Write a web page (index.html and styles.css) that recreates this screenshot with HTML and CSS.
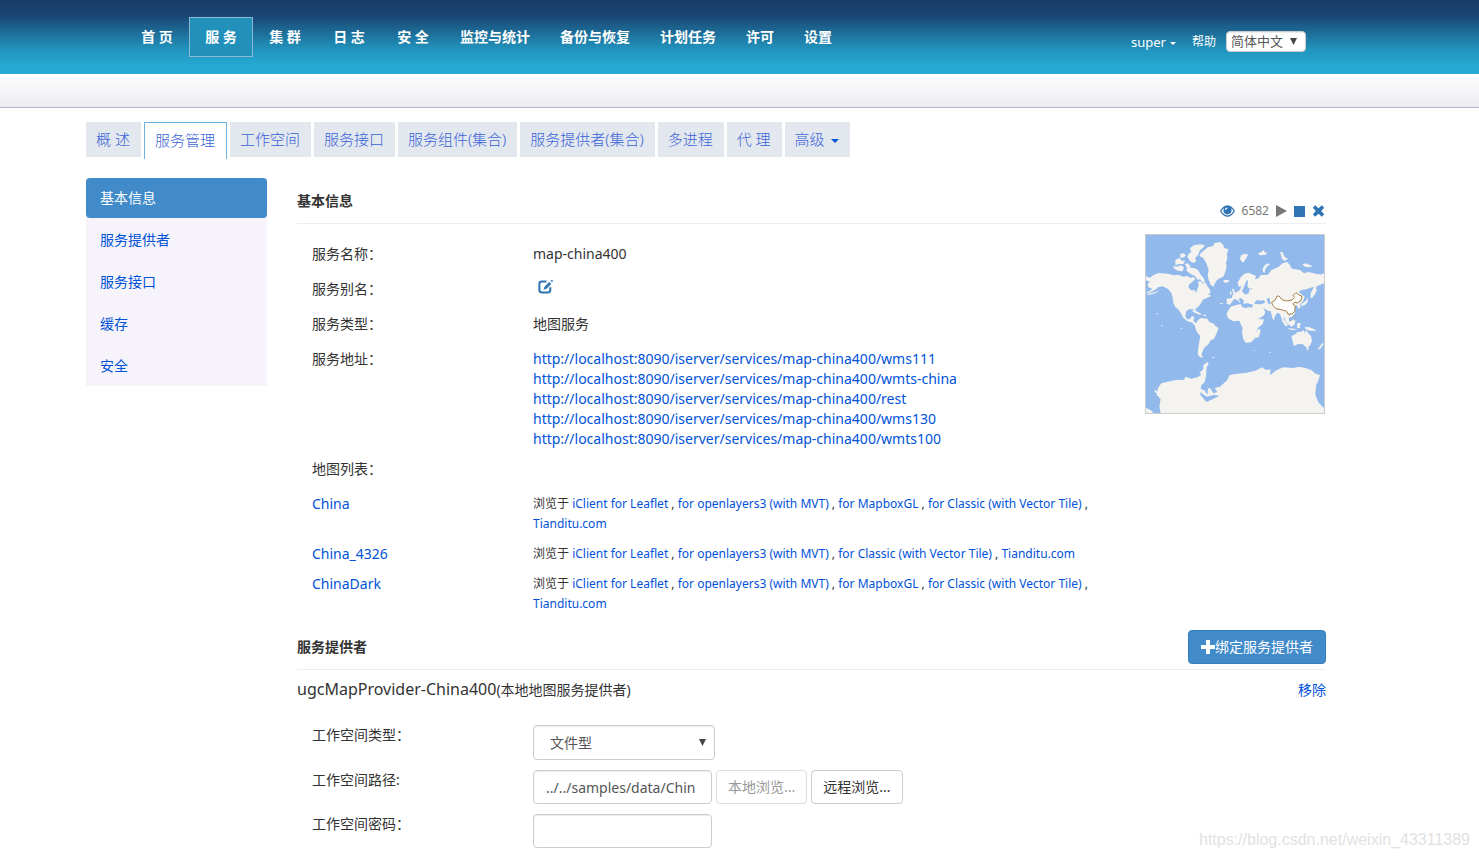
FILE: index.html
```html
<!DOCTYPE html>
<html lang="zh-CN">
<head>
<meta charset="utf-8">
<title>服务管理</title>
<link rel="stylesheet" href="styles.css">
</head>
<body>
<header class="topbar">
  <nav class="nav">
    <a href="#">首 页</a>
    <a href="#" class="current">服 务</a>
    <a href="#">集 群</a>
    <a href="#">日 志</a>
    <a href="#">安 全</a>
    <a href="#">监控与统计</a>
    <a href="#">备份与恢复</a>
    <a href="#">计划任务</a>
    <a href="#">许可</a>
    <a href="#">设置</a>
  </nav>
  <div class="account">
    <a href="#" class="user">super<span class="caret caret-small"></span></a>
    <a href="#">帮助</a>
    <span class="select-wrap lang">
      <select aria-label="语言"><option>简体中文</option></select>
      <svg class="arrow" viewBox="0 0 8 8" aria-hidden="true"><path d="M0 0h8L4 8z"/></svg>
    </span>
  </div>
</header>
<div class="subbar"></div>

<div class="page">
  <nav class="tabs">
    <a href="#">概 述</a>
    <a href="#" class="current">服务管理</a>
    <a href="#">工作空间</a>
    <a href="#">服务接口</a>
    <a href="#">服务组件(集合)</a>
    <a href="#">服务提供者(集合)</a>
    <a href="#">多进程</a>
    <a href="#">代 理</a>
    <a href="#">高级<span class="caret"></span></a>
  </nav>

  <div class="columns">
    <nav class="side">
      <a href="#" class="current">基本信息</a>
      <a href="#">服务提供者</a>
      <a href="#">服务接口</a>
      <a href="#">缓存</a>
      <a href="#">安全</a>
    </nav>

    <main class="main">
      <div class="section-head">
        <h2>基本信息</h2>
        <div class="status">
          <svg class="eye" viewBox="0 0 44 34" aria-hidden="true"><path fill="#2f75b5" fill-rule="evenodd" d="M0 17C6 6 14 0 22 0s16 6 22 17C38 28 30 34 22 34S6 28 0 17zm4 0c5 8 11 13 18 13s13-5 18-13c-2-4-5-7-8-9 1 2 2 4 2 7 0 7-5 12-12 12s-12-5-12-12c0-3 1-5 2-7-3 2-6 5-8 9z"/><circle cx="22" cy="14" r="9" fill="#2f75b5"/><path d="M16 14c0-4 3-6 6-6" fill="none" stroke="#fff" stroke-width="3"/></svg>
          <span>6582</span>
          <button type="button" aria-label="启动"><svg class="play" viewBox="0 0 11 12"><path fill="#777" d="M0 0l11 6-11 6z"/></svg></button>
          <button type="button" aria-label="停止"><svg class="stop" viewBox="0 0 11 11"><path fill="#2f75b5" d="M0 0h11v11H0z"/></svg></button>
          <button type="button" aria-label="删除"><svg class="cross" viewBox="0 0 36 36"><path fill="#2f75b5" d="M8 1l10 9L28 1l7 7-9 10 9 10-7 7-10-9-10 9-7-7 9-10L1 8z"/></svg></button>
        </div>
      </div>

      <div class="info">
        <div class="rows">
          <div class="row"><div class="label">服务名称：</div><div>map-china400</div></div>
          <div class="row"><div class="label">服务别名：</div><div><button type="button" class="edit" aria-label="编辑"><svg viewBox="0 0 44 40"><path fill="none" stroke="#2f75b5" stroke-width="6" d="M25 4H11Q4 4 4 11v18q0 7 7 7h18q7 0 7-7v-8"/><path fill="#2f75b5" d="M16 28l3-9L33 5l6 6-14 14zM36 2l2-2h6l-2 6z"/></svg></button></div></div>
          <div class="row"><div class="label">服务类型：</div><div>地图服务</div></div>
          <div class="row"><div class="label">服务地址：</div><div class="urls">
            <a href="#">http://localhost:8090/iserver/services/map-china400/wms111</a>
            <a href="#">http://localhost:8090/iserver/services/map-china400/wmts-china</a>
            <a href="#">http://localhost:8090/iserver/services/map-china400/rest</a>
            <a href="#">http://localhost:8090/iserver/services/map-china400/wms130</a>
            <a href="#">http://localhost:8090/iserver/services/map-china400/wmts100</a>
          </div></div>
          <div class="row"><div class="label">地图列表：</div></div>
          <div class="row"><a href="#">China</a><div class="views">浏览于 <a href="#">iClient for Leaflet</a> , <a href="#">for openlayers3 (with MVT)</a> , <a href="#">for MapboxGL</a> , <a href="#">for Classic (with Vector Tile)</a> , <a href="#">Tianditu.com</a></div></div>
          <div class="row"><a href="#">China_4326</a><div class="views">浏览于 <a href="#">iClient for Leaflet</a> , <a href="#">for openlayers3 (with MVT)</a> , <a href="#">for Classic (with Vector Tile)</a> , <a href="#">Tianditu.com</a></div></div>
          <div class="row"><a href="#">ChinaDark</a><div class="views">浏览于 <a href="#">iClient for Leaflet</a> , <a href="#">for openlayers3 (with MVT)</a> , <a href="#">for MapboxGL</a> , <a href="#">for Classic (with Vector Tile)</a> , <a href="#">Tianditu.com</a></div></div>
        </div>
        <svg class="map" viewBox="18 121 534 534" role="img" aria-label="map-china400">
          <path fill="#91b9eb" d="M18 121h534v534H18z"/>
          <g fill="#f4f3f0">
            <path d="M42 240l14-5 26 2 20 5 14-2 12 6 14-2 10 6 8-4 6 8-10 8-8 10 4 10 12 3 4 10 4-12 4-10-2-12 6-2 10 8 6-4 8 14 6 8 2 8-10 8 8-2 2 6-14 6-10 4-6 12-6 8-10 8 3 12-5-2-3-9-14 0-9 7-2 14 5 9 9-1 5-8 8 1-3 12 5 5 6 8 8 0 4 4-6 4-12-5-8-10-14-4-12-9-9-16-8-12-8-6-6-12-2-16-4-14-10-12-16-8-14 3-6 6-20 10-13 3 14-8 8-6-12-6-2-9 6-6-6-8z"/>
            <path d="M18 245l8 3 10 9-4 7-6-6-8 0zM22 298l24-6 14-6-14 10-20 5z"/>
            <path d="M182 176L203 158L219 154L224 145L240 142L250 150L252 160L266 164L261 176L262 192L258 204L260 216L256 232L250 246L236 252L228 260L220 276L212 270L206 256L203 240L206 226L200 208L190 190L178 184z"/>
            <path d="M150 160l12-8 20-3 12 2-4 8-10 8-6 14-8 8 2 12-8 4-10-6-8-12 4-10 8-4z"/>
            <path d="M120 178l10-2 8 6-6 6-10 2zM106 196l12-6 8 8 10 0-6 10-14 0-10 4zM100 214l12 2 10-4 10 6-4 12-14-2-12-6zM134 208l10-2 8 10-10 4zM140 218l22 2 12 6 8 14 10 12 3 12-9-2-6-8-8 1-6-10-16-8-10-9z"/>
            <path d="M248 259l8-4 11 2-1 5-10 3zM276 282l6 2 3 12 4 8-12 2 3-8zM270 292l4-2 1 9-5 2z"/>
            <path d="M293 264L302 248L314 237L326 234L348 244L345 254L358 250L360 242L384 240L394 226L414 218L428 206L442 202L450 212L456 222L480 226L492 236L506 232L530 238L552 240V266L538 272L528 276L530 288L524 300L514 312L512 296L522 276L510 280L500 284L484 286L476 292L486 300L494 306L490 318L480 328L482 338L476 342L470 332L464 334L466 346L464 358L454 368L446 370L448 380L446 390L438 382L434 370L430 366L438 396L434 392L425 372L420 358L412 354L404 366L402 378L397 370L392 350L384 348L370 340L376 352L372 362L354 374L349 366L340 344L336 336L340 330L322 326L310 328L312 318L302 310L296 312L302 326L294 318L284 312L278 318L270 330L260 328V312L276 310L278 302L290 292L300 286L304 274L296 276z"/>
            <path d="M262 352L272 336L286 332L302 328L306 336L318 341L324 337L342 340L350 358L356 374L372 374L368 388L354 400L348 412L350 424L342 434L334 442L318 445L310 434L306 414L308 400L302 388L298 378L280 380L266 372L260 362z"/>
            <path d="M350 408l8-6 4 6-6 20-8 2-2-10z"/>
            <path d="M172 378L182 370L202 372L208 382L222 388L226 394L236 400L230 416L222 432L210 438L206 448L196 456L190 464L184 480L190 488L180 488L173 478L176 452L181 424L172 414L165 398L168 386z"/>
            <path d="M454 424l10-4 10-9 10 0 7-5 3 8 5-8 5 9 9 9 3 16-6 12-7 9-9-7-6-6-16 1-10 6-2-8z"/>
            <path d="M494 396l14 2 12 4 10 8-12-2-10 0-12-6zM448 382l12-8 7 4-4 12-8 6-10-7zM425 370l10 8 9 14-4 3-12-12zM440 400l20 2 14 1-18 4zM472 385l10 0-3 16-8-2zM499 460l8 0-4 8zM547 445l4 3-10 14-8 4 5-9zM482 327l8-3 10-8 2-10 2 14-8 10-10 4zM510 306l8-16 6-8-4 16-6 10z"/>
            <path d="M303 182l12-5 10 3-4 7-4 6-6 10-6-2-5-9zM354 176l10-4 8-6 2 8 8-2-4 8-18 2zM368 230c0-13 6-21 19-24l2 4c-10 5-14 12-14 20l-2 6zM420 172l8 1 6 14 10 6-10 6-8-7zM487 209l12-3 8 4 12 4-12 4-12-2zM546 237h6v4h-6z"/>
            <path d="M18 640L32 646L40 655H18zM62 655L58 634L62 614L50 600L54 580L64 566L90 560L112 555L132 556L136 546L154 552L172 548L184 540L178 534L190 524V512L202 502L206 506L200 518L198 544L194 562L184 572L182 582L194 588L202 600L204 582L210 580L220 596L232 592L224 580L240 576L262 556L268 542L284 538L320 534L346 528L366 518L378 526L392 524L390 542L410 526L430 518L462 520L476 516L496 520L514 526L524 536L540 542L534 560L528 572L526 600L536 624L552 640V655zM42 585l8 3 4 8-8-2z"/>
          </g>
          <g fill="#91b9eb">
            <path d="M146 270l8-6 12 2 4 9-7 12-9 0-8-8zM343 324l8-8 10 2 12-1 2 7-12 5-18-1zM380 312l8-3 4 18-6 2-4-9zM306 290l10-24 5-10 3 3-2 15 6 8 12-2-12 6-2 10-10 4zM180 592l20 14 24-6 14 4-38 18-18-20z"/>
          </g>
          <g fill="#f4f3f0"><path d="M190 587l4 12-8-2zM207 582l6 18-8 0zM158 345l18 8 10 7-8 0-20-9zM190 360h8v4h-8zM64 391h4v3h-4zM50 355h4v4h-4zM122 401h5v2h-5zM388 471h5v3h-5zM341 467h4v2h-4zM241 325h7v3h-7zM217 487h6v3h-6z"/></g>
          <path fill="#fff" stroke="#a57b45" stroke-width="3" stroke-linejoin="round" d="M395 323L406 316L410 305L417 304L426 315L440 319L456 316L464 308L459 303L468 294L476 300L486 305L483 317L472 325L464 322L458 328L466 334L464 350L456 358L444 358L440 350L428 346L408 342L398 332z"/>
          <path fill="none" stroke="#999" stroke-width="2" stroke-dasharray="5 4" d="M447 359l6 20M465 358l-2 20"/>
        </svg>
      </div>

      <div class="section-head">
        <h2>服务提供者</h2>
        <button type="button" class="btn primary"><svg class="plus" viewBox="0 0 14 14" aria-hidden="true"><path fill="#fff" d="M5 0h4v5h5v4H9v5H5V9H0V5h5z"/></svg>绑定服务提供者</button>
      </div>
      <div class="provider">
        <h3>ugcMapProvider-China400<small>(本地地图服务提供者)</small></h3>
        <a href="#">移除</a>
      </div>
      <form class="form">
        <div class="field">
          <label for="type">工作空间类型：</label>
          <span class="select-wrap kind">
            <select id="type"><option>文件型</option></select>
            <svg class="arrow" viewBox="0 0 8 8" aria-hidden="true"><path d="M0 0h8L4 8z"/></svg>
          </span>
        </div>
        <div class="field">
          <label for="path">工作空间路径:</label>
          <div class="controls">
            <input id="path" type="text" value="../../samples/data/Chin">
            <button type="button" class="btn" disabled>本地浏览...</button>
            <button type="button" class="btn">远程浏览...</button>
          </div>
        </div>
        <div class="field">
          <label for="pass">工作空间密码：</label>
          <div class="controls"><input id="pass" type="password"></div>
        </div>
      </form>
    </main>
  </div>
</div>
<div class="watermark">https://blog.csdn.net/weixin_43311389</div>
</body>
</html>
```
FILE: styles.css
```css
* { box-sizing: border-box; }
body {
  margin: 0;
  position: relative;
  background: #fff;
  color: #333;
  font: 14px/20px "Noto Sans", "Noto Sans CJK SC", sans-serif;
}
a { color: #0052d9; text-decoration: none; }
button, input, select { font: inherit; margin: 0; }
h2, h3 { margin: 0; font-size: 14px; }

.topbar {
  height: 74px;
  padding: 17px 173px 0 125px;
  display: flex;
  justify-content: space-between;
  align-items: flex-start;
  background: linear-gradient(#193b69 0, #194370 14px, #2195be 50px, #25a9d3 66px, #25aad4);
}
.nav { display: flex; }
.nav a {
  min-width: 64px;
  padding: 0 14px;
  border: 1px solid transparent;
  color: #fff;
  font-weight: bold;
  line-height: 38px;
  text-align: center;
  white-space: nowrap;
}
.nav a:last-child, .nav a:nth-last-child(2) { min-width: 0; }
.nav a.current { background: #2191bb; border-color: #8cb8d6; }
.account { display: flex; align-items: center; padding-top: 14px; gap: 10px; font-size: 12px; }
.account a { color: #fff; }
.account .user { margin-right: 6px; font-size: 13px; }
.caret {
  display: inline-block;
  margin-left: 6px;
  vertical-align: middle;
  border: 4px solid transparent;
  border-top-color: currentColor;
  border-bottom: 0;
}
.caret-small { margin-left: 4px; border-width: 3px 3px 0; }
.select-wrap { position: relative; display: block; }
.select-wrap select {
  appearance: none;
  width: 100%;
  background: #fff;
  border: 1px solid #ccc;
  border-radius: 4px;
  color: #555;
  box-shadow: inset 0 1px 1px rgba(0, 0, 0, .08);
}
.arrow { position: absolute; right: 9px; top: 50%; width: 7px; height: 7px; margin-top: -4px; fill: #444; pointer-events: none; }
.lang { width: 80px; }
.lang select { display: block; height: 21px; padding: 0 4px; font-size: 13px; line-height: 19px; }

.subbar { height: 34px; border-bottom: 1px solid #b0b5c8; background: linear-gradient(#fff, #ebecf0); }

.page { padding: 14px 153px 10px 86px; }
.tabs { display: flex; gap: 3px; height: 37px; align-items: flex-start; }
.tabs a {
  padding: 0 11px 0 10px;
  background: #e3e8ef;
  color: #3a62d7;
  font-size: 15px;
  font-weight: 300;
  line-height: 34px;
  height: 35px;
  white-space: nowrap;
}
.tabs a.current { height: 37px; background: #fff; border: 1px solid #6db3e6; border-bottom: 0; }
.tabs .caret { color: #0052d9; }

.columns { display: grid; grid-template-columns: 181px minmax(0, 1fr); gap: 30px; align-items: start; margin-top: 19px; }
.side { display: flex; flex-direction: column; gap: 2px; background: #f6f4fa; }
.side a { padding: 10px 14px; }
.side a.current { background: #428bca; color: #fff; border-radius: 4px; }

.section-head { display: flex; justify-content: space-between; align-items: center; height: 46px; border-bottom: 1px solid #eee; }
.status { display: flex; align-items: center; gap: 7px; align-self: flex-end; margin: 0 1px 2px 0; color: #777; font-size: 12px; }
.status button, .edit { display: block; padding: 0; border: 0; background: none; }
.status svg, .edit svg { display: block; }
.status .eye { width: 15px; height: 12px; }
.status .play { width: 11px; height: 12px; }
.status .stop { width: 11px; height: 11px; }
.status .cross { width: 13px; height: 12px; }
.edit { padding: 1px 5px; }
.edit svg { width: 15px; height: 14px; }

.info { display: flex; justify-content: space-between; align-items: flex-start; padding: 10px 1px 5px 15px; }
.rows { padding-top: 5px; flex: 0 1 800px; }
.row { display: grid; grid-template-columns: 221px minmax(0, 1fr); padding: 5px 0; }
.label { padding-bottom: 5px; }
.urls { display: flex; flex-direction: column; }
.views { font-size: 12px; }
.map { width: 180px; height: 180px; border: 1px solid #ccc; flex: none; }

.btn {
  height: 34px;
  padding: 0 11px;
  border: 1px solid #ccc;
  border-radius: 4px;
  background: #fff;
  color: #333;
  white-space: nowrap;
}
.btn:disabled { color: #999; border-color: #ddd; }
.btn.primary { display: flex; align-items: center; padding: 0 12px; background: #428bca; border-color: #357ebd; color: #fff; }
.plus { width: 14px; height: 14px; }
.provider { display: flex; justify-content: space-between; align-items: center; padding: 9px 0 10px; }
.provider h3 { font-size: 16px; font-weight: normal; }
.provider small { font-size: 14px; }
.form { display: grid; gap: 10px; padding: 15px 0 0 15px; }
.field { display: grid; grid-template-columns: 221px minmax(0, 1fr); }
.controls { display: flex; gap: 4px; }
.controls input {
  width: 179px;
  height: 34px;
  padding: 0 12px;
  border: 1px solid #ccc;
  border-radius: 4px;
  color: #555;
  box-shadow: inset 0 1px 1px rgba(0, 0, 0, .08);
}
.kind { width: 182px; }
.kind select { display: block; height: 35px; padding: 0 16px; }

.watermark { position: absolute; right: 9px; bottom: 8px; color: #e2e2e2; font: 16px/20px "Liberation Sans", sans-serif; }
```
